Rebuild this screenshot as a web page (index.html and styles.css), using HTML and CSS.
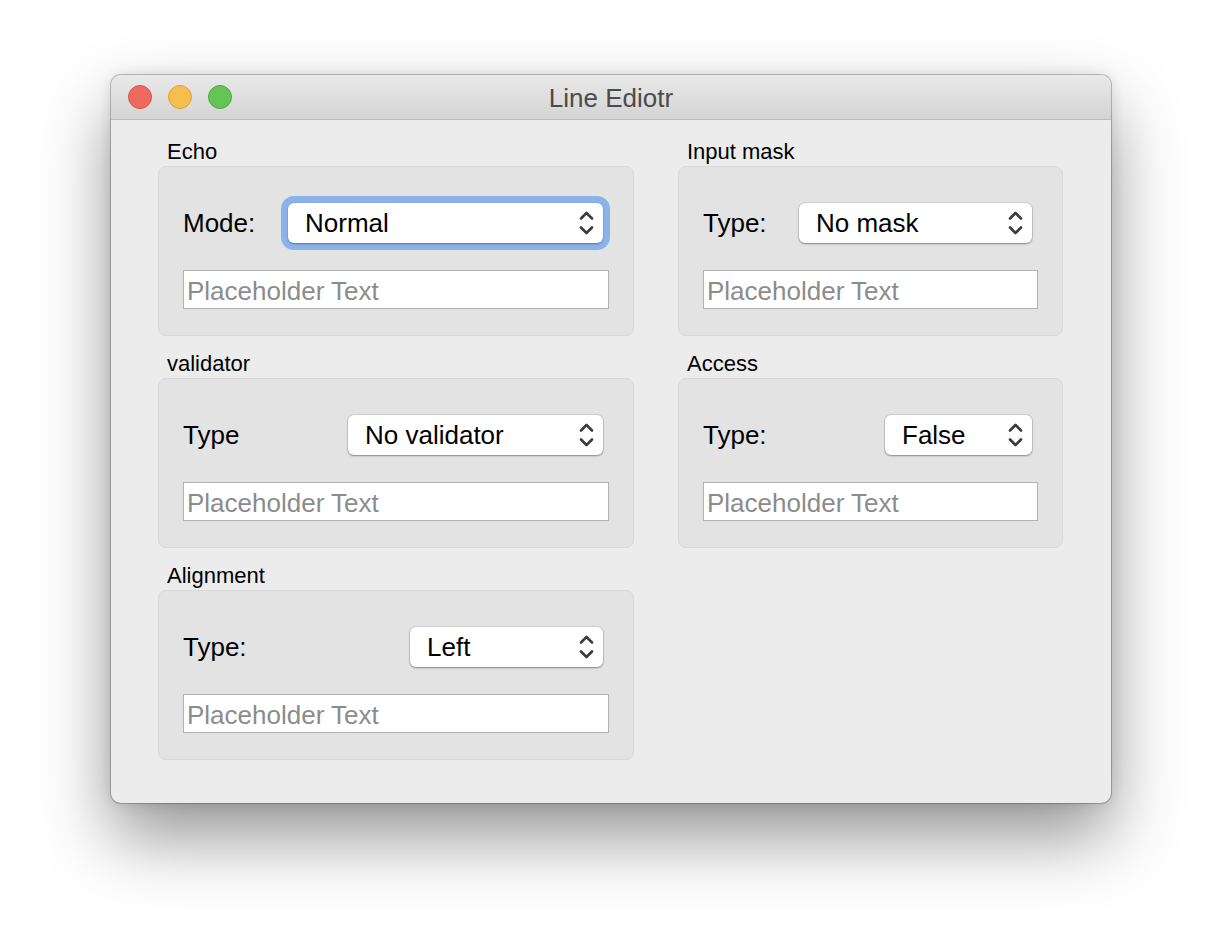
FILE: index.html
```html
<!doctype html>
<html>
  <head>
    <title>Line Ediotr</title>
    <link rel="stylesheet" href="styles.css">
  </head>
  <body>
    <div class="window">
      <header class="titlebar">
        <div class="lights">
          <span class="light close"></span>
          <span class="light minimize"></span>
          <span class="light zoom"></span>
        </div>
        <h1>Line Ediotr</h1>
      </header>
      <main class="content">
        <section class="group">
          <h2>Echo</h2>
          <div class="group-box">
            <div class="combo-row">
              <span class="field-label">Mode:</span>
              <div class="combo combo-echo focused">
                <span>Normal</span>
                <svg class="arrows" width="15" height="24" viewBox="0 0 15 24"><path d="M2 7.5 L7.5 2 L13 7.5 M2 16.5 L7.5 22 L13 16.5"/></svg>
              </div>
            </div>
            <input class="line-edit" type="text" placeholder="Placeholder Text">
          </div>
        </section>
        <section class="group">
          <h2>Input mask</h2>
          <div class="group-box">
            <div class="combo-row">
              <span class="field-label">Type:</span>
              <div class="combo combo-mask">
                <span>No mask</span>
                <svg class="arrows" width="15" height="24" viewBox="0 0 15 24"><path d="M2 7.5 L7.5 2 L13 7.5 M2 16.5 L7.5 22 L13 16.5"/></svg>
              </div>
            </div>
            <input class="line-edit" type="text" placeholder="Placeholder Text">
          </div>
        </section>
        <section class="group">
          <h2>validator</h2>
          <div class="group-box">
            <div class="combo-row">
              <span class="field-label">Type</span>
              <div class="combo combo-validator">
                <span>No validator</span>
                <svg class="arrows" width="15" height="24" viewBox="0 0 15 24"><path d="M2 7.5 L7.5 2 L13 7.5 M2 16.5 L7.5 22 L13 16.5"/></svg>
              </div>
            </div>
            <input class="line-edit" type="text" placeholder="Placeholder Text">
          </div>
        </section>
        <section class="group">
          <h2>Access</h2>
          <div class="group-box">
            <div class="combo-row">
              <span class="field-label">Type:</span>
              <div class="combo combo-access">
                <span>False</span>
                <svg class="arrows" width="15" height="24" viewBox="0 0 15 24"><path d="M2 7.5 L7.5 2 L13 7.5 M2 16.5 L7.5 22 L13 16.5"/></svg>
              </div>
            </div>
            <input class="line-edit" type="text" placeholder="Placeholder Text">
          </div>
        </section>
        <section class="group">
          <h2>Alignment</h2>
          <div class="group-box">
            <div class="combo-row">
              <span class="field-label">Type:</span>
              <div class="combo combo-align">
                <span>Left</span>
                <svg class="arrows" width="15" height="24" viewBox="0 0 15 24"><path d="M2 7.5 L7.5 2 L13 7.5 M2 16.5 L7.5 22 L13 16.5"/></svg>
              </div>
            </div>
            <input class="line-edit" type="text" placeholder="Placeholder Text">
          </div>
        </section>
      </main>
    </div>
  </body>
</html>
```

FILE: styles.css
```css
html {
  height: 100%;
  background-color: #ffffff;
}
body {
  margin: 0;
  min-height: 100%;
  box-sizing: border-box;
  padding-top: 75px;
  background-color: #ffffff;
  font-family: "Liberation Sans", Arial, sans-serif;
}
.window {
  width: 1000px;
  margin: 0 auto;
  background-color: #ececec;
  border-radius: 10px;
  overflow: hidden;
  box-shadow: 0 0 0 1px rgba(0, 0, 0, 0.22), 0 0 14px rgba(0, 0, 0, 0.12), 0 34px 70px rgba(0, 0, 0, 0.42);
}
.titlebar {
  position: relative;
  height: 44px;
  display: flex;
  align-items: center;
  justify-content: center;
  background: linear-gradient(#e9e9e9, #d4d4d4);
  border-bottom: 1px solid #bdbdbd;
}
.titlebar h1 {
  margin: 3px 0 0;
  font-size: 26px;
  font-weight: normal;
  color: #4b4b4b;
}
.lights {
  position: absolute;
  left: 17px;
  top: 10px;
  display: flex;
  gap: 16px;
}
.light {
  width: 24px;
  height: 24px;
  box-sizing: border-box;
  border-radius: 50%;
}
.close {
  background-color: #ee6a5f;
  border: 1px solid #d5544a;
}
.minimize {
  background-color: #f6be4f;
  border: 1px solid #d9a13c;
}
.zoom {
  background-color: #62c554;
  border: 1px solid #4fa83f;
}

.content {
  display: grid;
  grid-template-columns: 476px 385px;
  column-gap: 44px;
  row-gap: 15px;
  padding: 19px 0 43px 47px;
}
.group h2 {
  margin: 0 0 1px 9px;
  font-size: 22px;
  line-height: 26px;
  font-weight: normal;
  color: #000;
}
.group-box {
  display: flex;
  flex-direction: column;
  gap: 27px;
  padding: 36px 24px 26px 24px;
  background-color: #e3e3e3;
  border: 1px solid #d8d8d8;
  border-radius: 8px;
}
.combo-row {
  display: flex;
  align-items: center;
  justify-content: space-between;
  padding-right: 6px;
  height: 40px;
}
.field-label {
  font-size: 26px;
  color: #000;
}
.combo {
  height: 40px;
  box-sizing: border-box;
  display: flex;
  align-items: center;
  justify-content: space-between;
  padding: 0 9px 0 17px;
  font-size: 26px;
  color: #000;
  background-color: #fff;
  border-radius: 6px;
  box-shadow: 0 0 0 1px rgba(0, 0, 0, 0.08), 0 1px 2px rgba(0, 0, 0, 0.35);
}
.combo.focused {
  box-shadow: 0 1px 2px rgba(0, 0, 0, 0.35), 0 0 0 7px #8bb2e9;
}
.arrows {
  fill: none;
  stroke: #3b3b3b;
  stroke-width: 2.6;
  stroke-linecap: round;
  stroke-linejoin: round;
}
.combo-echo { width: 315px; }
.combo-mask { width: 233px; }
.combo-validator { width: 255px; }
.combo-access { width: 147px; }
.combo-align { width: 193px; }

.line-edit {
  height: 39px;
  box-sizing: border-box;
  margin: 0;
  padding: 3px 3px 0;
  font-family: "Liberation Sans", Arial, sans-serif;
  font-size: 26px;
  background-color: #fff;
  border: 1px solid #b2b2b2;
  border-radius: 0;
  outline: none;
}
.line-edit::placeholder {
  color: #8c8c8c;
}
```
